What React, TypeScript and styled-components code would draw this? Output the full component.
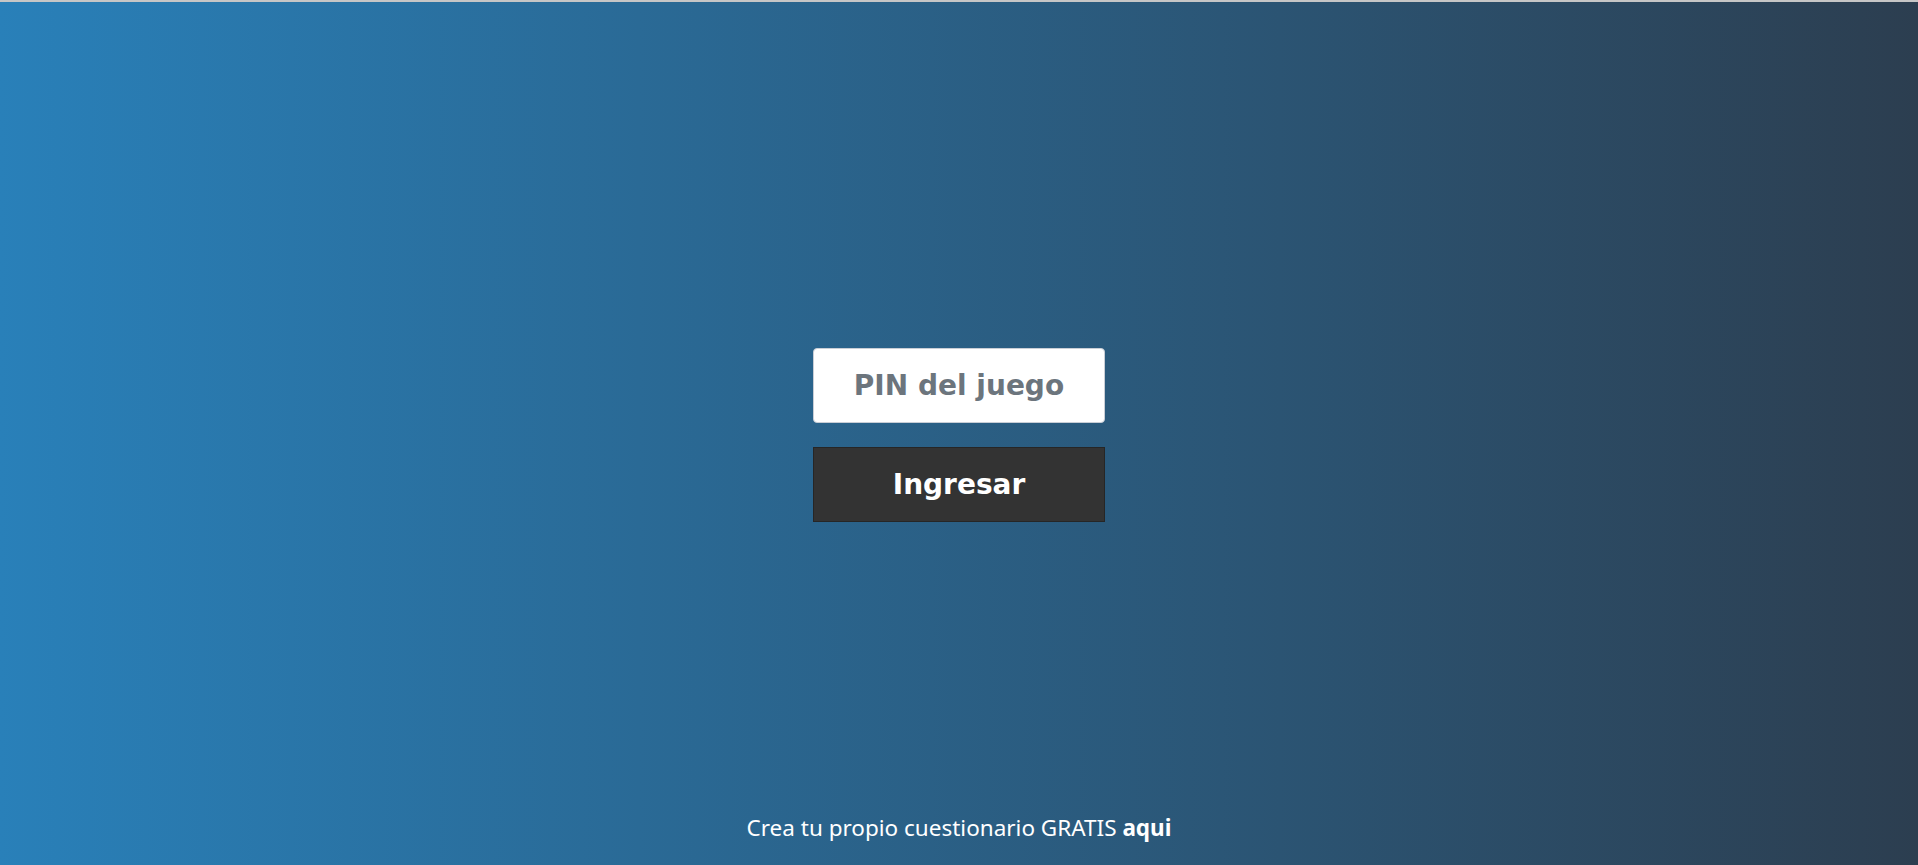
import styled, { createGlobalStyle } from 'styled-components';

const GlobalStyle = createGlobalStyle`
  html, body {
    margin: 0;
    padding: 0;
    height: 100%;
  }
  #root {
    height: 100%;
  }
`;

const Page = styled.div`
  box-sizing: border-box;
  height: 865px;
  border-top: 2px solid #c6c6c6;
  background: linear-gradient(to right, #2980b9, #2c3e50);
  display: flex;
  flex-direction: column;
  align-items: center;
`;

const Form = styled.form`
  flex: 1;
  display: flex;
  flex-direction: column;
  justify-content: center;
  gap: 24px;
  padding-top: 54px;
`;

const PinInput = styled.input`
  box-sizing: border-box;
  width: 292px;
  height: 75px;
  border: 1px solid #c9ced6;
  border-radius: 4px;
  background: #ffffff;
  text-align: center;
  font-family: "DejaVu Sans", sans-serif;
  font-weight: bold;
  font-size: 28px;
  color: #495057;
  outline: none;

  &::placeholder {
    color: #6c757d;
  }
`;

const SubmitButton = styled.button`
  box-sizing: border-box;
  width: 292px;
  height: 75px;
  border: 1px solid #262626;
  border-radius: 0;
  background: #333333;
  color: #ffffff;
  font-family: "DejaVu Sans", sans-serif;
  font-weight: bold;
  font-size: 28px;
  cursor: pointer;
`;

const Footer = styled.p`
  margin: 0 0 22px;
  font-family: "Noto Sans", "Open Sans", sans-serif;
  font-size: 22.5px;
  line-height: 30px;
  color: #ffffff;

  a {
    color: #ffffff;
    font-weight: bold;
    text-decoration: none;
  }
`;

export default function App() {
  return (
    <>
      <GlobalStyle />
      <Page>
        <Form onSubmit={(e) => e.preventDefault()}>
          <PinInput type="text" placeholder="PIN del juego" />
          <SubmitButton type="submit">Ingresar</SubmitButton>
        </Form>
        <Footer>
          Crea tu propio cuestionario GRATIS <a href="#">aqui</a>
        </Footer>
      </Page>
    </>
  );
}
